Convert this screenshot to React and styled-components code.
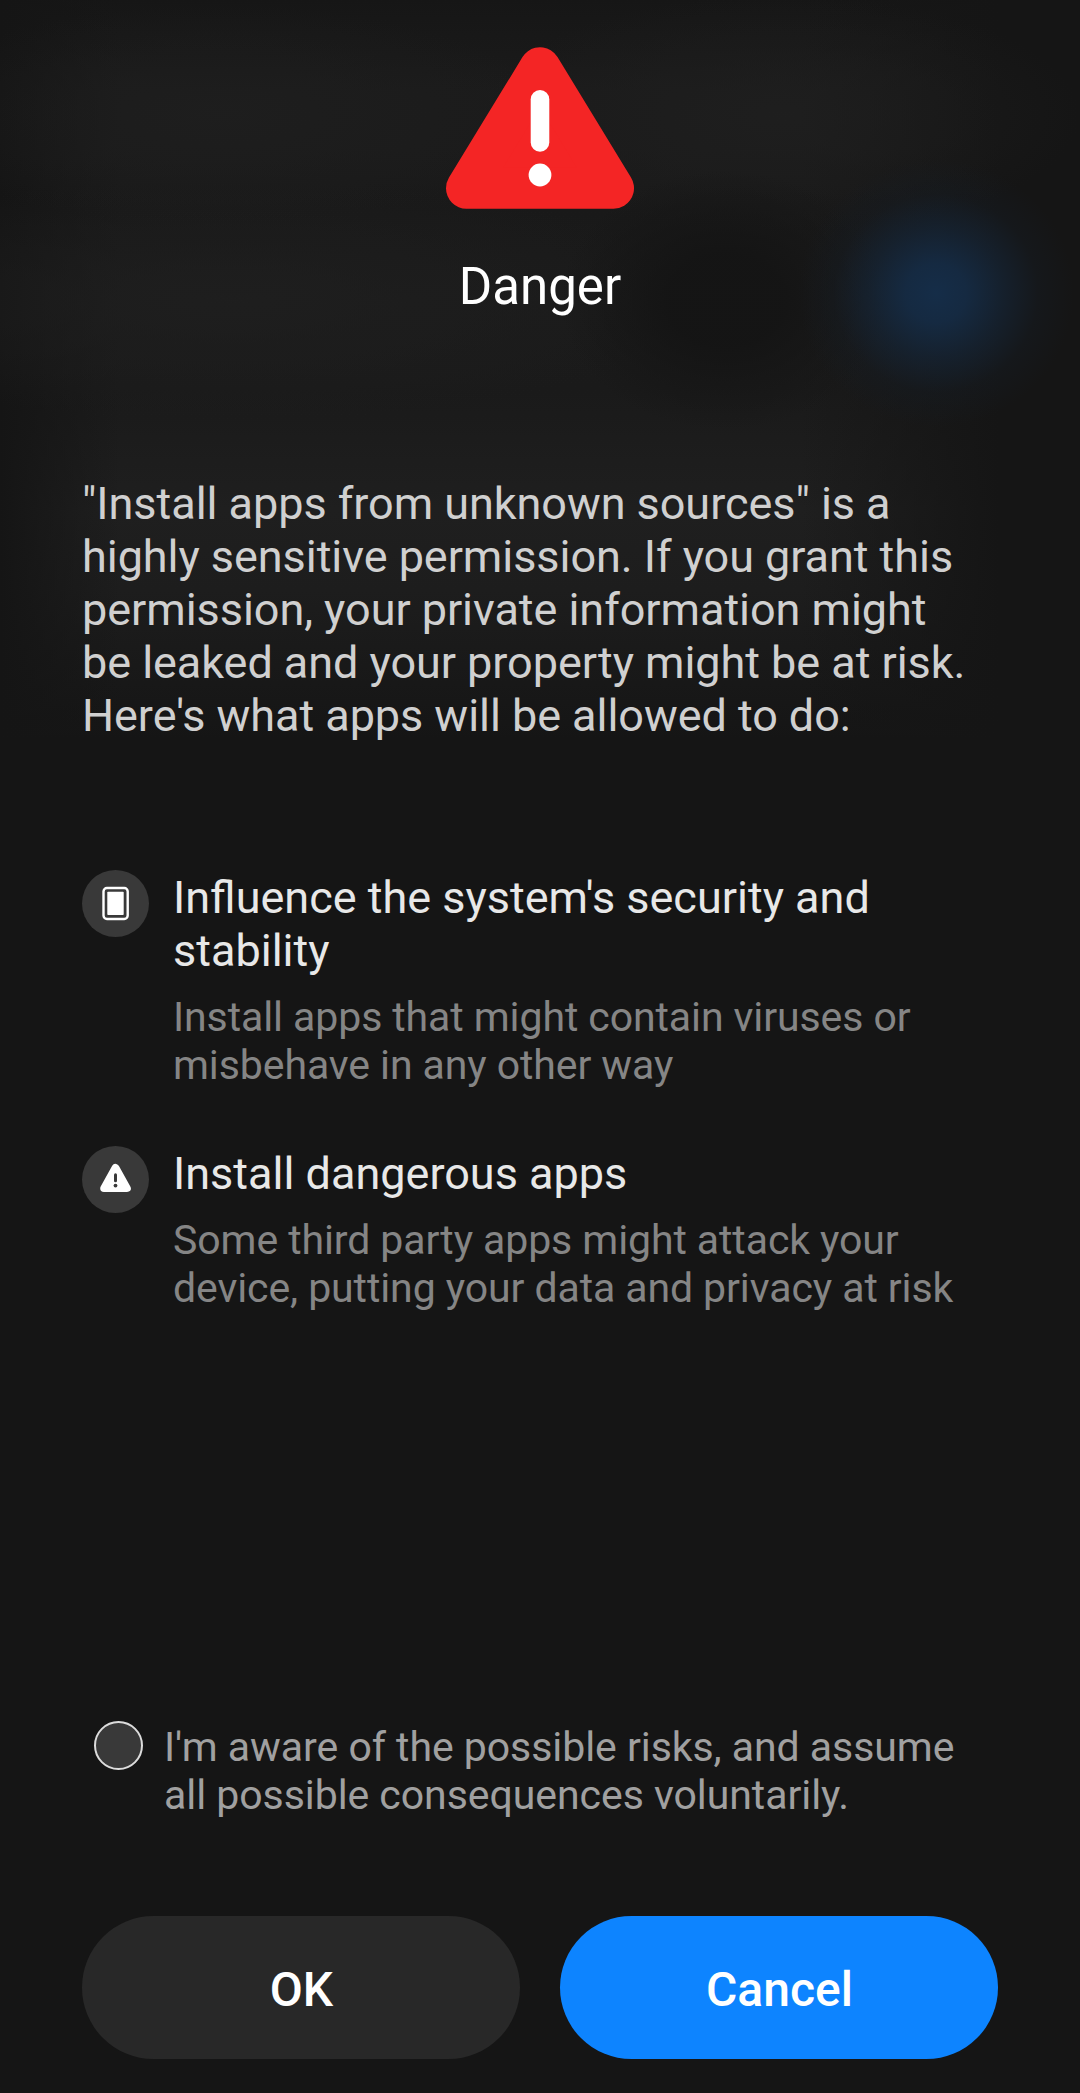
import React, { useState } from "react";
import styled, { createGlobalStyle } from "styled-components";

const GlobalStyle = createGlobalStyle`
  * { box-sizing: border-box; }
  body {
    margin: 0;
    background: #151515;
    font-family: Roboto, "Noto Sans", sans-serif;
  }
`;

const Screen = styled.main`
  width: 1080px;
  height: 2093px;
  padding: 47px 82px 34px;
  display: flex;
  flex-direction: column;
  overflow: hidden;
  background:
    radial-gradient(ellipse 138px 134px at 936px 293px, #152d48 0%, rgba(21, 43, 68, 0.94) 22%, rgba(21, 37, 55, 0.7) 48%, rgba(21, 29, 38, 0.36) 74%, rgba(21, 22, 24, 0) 100%),
    radial-gradient(ellipse 165px 130px at 725px 300px, rgba(20, 20, 20, 0.9) 35%, rgba(20, 20, 20, 0) 100%),
    radial-gradient(ellipse 330px 110px at 220px 115px, rgba(31, 31, 31, 0.7), rgba(31, 31, 31, 0)),
    radial-gradient(ellipse 300px 120px at 780px 115px, rgba(31, 31, 31, 0.8), rgba(31, 31, 31, 0)),
    radial-gradient(ellipse 480px 120px at 230px 300px, rgba(31, 31, 31, 0.8), rgba(31, 31, 31, 0)),
    linear-gradient(90deg, #151515 0, rgba(21, 21, 21, 0) 120px, rgba(21, 21, 21, 0) 800px, #151515 1000px),
    linear-gradient(180deg, #161616 0, #1b1b1b 90px, #1b1b1b 150px, #191919 210px, #1b1b1b 300px, #1a1a1a 390px, #1f1f1f 510px, #1d1d1d 590px, #151515 740px);
`;

const Header = styled.header`
  display: flex;
  flex-direction: column;
  align-items: center;
  height: 430px;
`;

const DangerMark = styled.svg`
  display: block;
  width: 190px;
  height: 163px;
  margin-bottom: 47px;
`;

const Heading = styled.h1`
  margin: 0;
  color: #fff;
  font-size: 51px;
  font-weight: 400;
  line-height: 60px;
`;

const Intro = styled.p`
  margin: 0 0 128px;
  color: #d0d0d0;
  font-size: 45px;
  line-height: 53px;
  letter-spacing: -0.05px;
  white-space: pre-line;
`;

const RiskList = styled.ul`
  display: flex;
  flex-direction: column;
  gap: 57px;
  margin: 0;
  padding: 0;
  list-style: none;
`;

const Risk = styled.li`
  display: flex;
  align-items: flex-start;
  gap: 24px;
`;

const Badge = styled.span`
  flex: none;
  display: flex;
  width: 67px;
  height: 67px;
  border-radius: 50%;
  background: #393939;
`;

const RiskText = styled.div`
  display: flex;
  flex-direction: column;
  gap: 16px;
  padding-top: 1px;
  white-space: pre-line;
`;

const RiskTitle = styled.h2`
  margin: 0;
  color: #e8e8e8;
  font-size: 45px;
  font-weight: 400;
  line-height: 53px;
`;

const RiskDetail = styled.p`
  margin: 0;
  color: #858585;
  font-size: 41px;
  line-height: 48px;
  letter-spacing: -0.09px;
`;

const Footer = styled.footer`
  margin-top: auto;
`;

const Consent = styled.label`
  display: flex;
  align-items: flex-start;
  gap: 21px;
  padding-left: 12px;
  margin-bottom: 97px;
  color: #a0a0a0;
  font-size: 41px;
  line-height: 48px;
  letter-spacing: -0.05px;
  white-space: pre-line;
`;

const ConsentToggle = styled.input`
  appearance: none;
  flex: none;
  width: 49px;
  height: 49px;
  margin: -2px 0 0;
  border: 2px solid #dcdcdc;
  border-radius: 50%;
  background: #393939;

  &:checked {
    background: #0d84ff;
  }
`;

const Actions = styled.div`
  display: grid;
  grid-template-columns: 1fr 1fr;
  gap: 40px;
`;

const Button = styled.button`
  height: 143px;
  padding: 4px 0 0 1px;
  border: 0;
  border-radius: 72px;
  background: ${({ $primary }) => ($primary ? "#0d84ff" : "#282828")};
  color: #fff;
  font: 500 48px/57px Roboto, "Noto Sans", sans-serif;
`;

const DeviceIcon = () => (
  <svg width="67" height="67" viewBox="0 0 67 67" fill="none">
    <rect x="21.5" y="18" width="24.2" height="31" rx="3.4" stroke="#fff" strokeWidth="2.4" />
    <rect x="25.3" y="21.8" width="16.4" height="23.2" rx="0.8" fill="#fff" />
  </svg>
);

const WarningIcon = () => (
  <svg width="67" height="67" viewBox="0 0 67 67">
    <path
      d="M33.5 21.7 45 42.3H22Z"
      fill="#fff"
      stroke="#fff"
      strokeWidth="7.6"
      strokeLinejoin="round"
    />
    <path d="M33.5 28.8v6" stroke="#393939" strokeWidth="3" strokeLinecap="round" />
    <circle cx="33.5" cy="39.6" r="1.9" fill="#393939" />
  </svg>
);

const risks = [
  {
    icon: <DeviceIcon />,
    title: "Influence the system's security and\nstability",
    detail: "Install apps that might contain viruses or\nmisbehave in any other way",
  },
  {
    icon: <WarningIcon />,
    title: "Install dangerous apps",
    detail: "Some third party apps might attack your\ndevice, putting your data and privacy at risk",
  },
];

export default function App() {
  const [aware, setAware] = useState(false);

  return (
    <>
      <GlobalStyle />
      <Screen>
        <Header>
          <DangerMark viewBox="445 47 190 163">
            <path
              d="M540 67.8 613.5 188.2H466.5Z"
              fill="#f42525"
              stroke="#f42525"
              strokeWidth="41"
              strokeLinejoin="round"
            />
            <path d="M540 99.3v43.1" stroke="#fff" strokeWidth="18.6" strokeLinecap="round" />
            <circle cx="540" cy="175" r="11.4" fill="#fff" />
          </DangerMark>
          <Heading>Danger</Heading>
        </Header>

        <Intro>
          {"\"Install apps from unknown sources\" is a\nhighly sensitive permission. If you grant this\npermission, your private information might\nbe leaked and your property might be at risk.\nHere's what apps will be allowed to do:"}
        </Intro>

        <RiskList>
          {risks.map(({ icon, title, detail }) => (
            <Risk key={title}>
              <Badge>{icon}</Badge>
              <RiskText>
                <RiskTitle>{title}</RiskTitle>
                <RiskDetail>{detail}</RiskDetail>
              </RiskText>
            </Risk>
          ))}
        </RiskList>

        <Footer>
          <Consent>
            <ConsentToggle
              type="checkbox"
              checked={aware}
              onChange={(event) => setAware(event.target.checked)}
            />
            <span>{"I'm aware of the possible risks, and assume\nall possible consequences voluntarily."}</span>
          </Consent>
          <Actions>
            <Button type="button">OK</Button>
            <Button type="button" $primary>Cancel</Button>
          </Actions>
        </Footer>
      </Screen>
    </>
  );
}
